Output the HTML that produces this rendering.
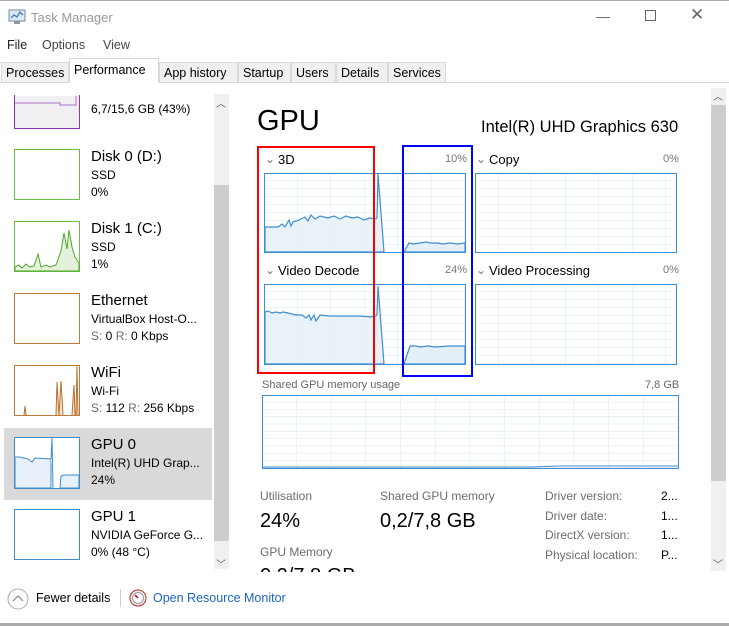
<!DOCTYPE html>
<html><head><meta charset="utf-8"><style>
*{margin:0;padding:0;box-sizing:border-box}
body{width:729px;height:626px;background:#fff;font-family:"Liberation Sans",sans-serif;color:#000;position:relative;overflow:hidden}
.a{position:absolute;white-space:nowrap}
.t{font-size:12.5px}
.g{color:#6d6d6d}
.tab{position:absolute;top:62px;height:20px;border:1px solid #d9d9d9;border-bottom:none;background:#f0f0f0;font-size:12.5px;padding:3px 4px 0}
.thumb{position:absolute;left:14px;width:66px;height:51px;border:1px solid}
.n1{font-size:15px}
.n2{font-size:12px}
</style></head><body>
<div class="a" style="left:0;top:0;width:729px;height:1px;background:#aaa"></div>
<svg class="a" style="left:8px;top:9px" width="18" height="16"><rect x="1" y="1" width="16" height="11" fill="#dfe9f3" stroke="#7a8a99"/><polyline points="3,9 6,6 9,8 12,3 15,6" fill="none" stroke="#3a7bc8" stroke-width="1.3"/><rect x="6" y="12" width="6" height="3" fill="#8a96a3"/></svg>
<div class="a" style="left:31px;top:10px;font-size:13px;color:#999">Task Manager</div>
<div class="a" style="left:596px;top:8px;font-size:14px;color:#666">—</div>
<div class="a" style="left:645px;top:10px;width:11px;height:11px;border:1px solid #666"></div>
<div class="a" style="left:690px;top:5px;font-size:17px;color:#666">✕</div>
<div class="a t" style="left:7px;top:38px;color:#222">File</div>
<div class="a t" style="left:42px;top:38px;color:#444">Options</div>
<div class="a t" style="left:103px;top:38px;color:#444">View</div>
<div class="a" style="left:0;top:82px;width:729px;height:1px;background:#d9d9d9"></div>
<div class="tab" style="left:1px;width:68px">Processes</div>
<div class="tab" style="left:69px;top:58px;height:25px;width:90px;background:#fff;padding-top:4px">Performance</div>
<div class="tab" style="left:159px;width:79px">App history</div>
<div class="tab" style="left:238px;width:53px">Startup</div>
<div class="tab" style="left:291px;width:45px">Users</div>
<div class="tab" style="left:336px;width:52px">Details</div>
<div class="tab" style="left:388px;width:58px">Services</div>
<div class="a" style="left:214px;top:94px;width:15px;height:475px;background:#f0f0f0"></div>
<div class="a" style="left:214px;top:185px;width:15px;height:356px;background:#cdcdcd"></div>
<div class="a" style="left:216px;top:95px;font-size:10px;color:#555">︿</div>
<div class="a" style="left:216px;top:556px;font-size:10px;color:#555">﹀</div>
<div class="a" style="left:4px;top:428px;width:208px;height:72px;background:#d9d9d9"></div>
<svg class="a" style="left:14px;top:95px" width="66" height="34"><rect x="0.5" y="0" width="65" height="33.5" fill="#f0f0f2" stroke="#9b30b8"/><path d="M0.5 8H46V10H62V1" fill="none" stroke="#b06cc8"/><rect x="0" y="0" width="66" height="1" fill="#fff"/><path d="M0.5 0V33.5H65.5V0" fill="none" stroke="#9b30b8"/></svg>
<div class="a n2" style="left:91px;top:102px">6,7/15,6 GB (43%)</div>
<div class="thumb" style="top:149px;border-color:#6cbf45"></div>
<div class="a n1" style="left:91px;top:148px">Disk 0 (D:)</div>
<div class="a n2" style="left:91px;top:168px">SSD</div>
<div class="a n2" style="left:91px;top:185px">0%</div>
<svg class="a" style="left:14px;top:221px" width="66" height="51"><rect x="0.5" y="0.5" width="65" height="50" fill="#fff" stroke="#6cbf45"/><path d="M1 50L1 46 5 44 8 47 12 43 16 46 20 45 24 33 27 46 32 44 36 46 42 44 47 30 50 12 53 28 55 9 58 26 61 36 65 42 65 50Z" fill="#e4f2dc" stroke="#4ea82a"/></svg>
<div class="a n1" style="left:91px;top:220px">Disk 1 (C:)</div>
<div class="a n2" style="left:91px;top:240px">SSD</div>
<div class="a n2" style="left:91px;top:257px">1%</div>
<div class="thumb" style="top:293px;border-color:#c07a38"></div>
<div class="a n1" style="left:91px;top:292px">Ethernet</div>
<div class="a n2" style="left:91px;top:312px">VirtualBox Host-O...</div>
<div class="a n2" style="left:91px;top:329px"><span class="g">S:</span> 0 <span class="g">R:</span> 0 Kbps</div>
<svg class="a" style="left:14px;top:365px" width="66" height="51"><rect x="0.5" y="0.5" width="65" height="50" fill="#fff" stroke="#c07a38"/><path d="M10 50L11 41 12 50M42 50L43 17 45 50M45 50L47 16 49 50M58 50L60 20 61 50M62 50L63 1 64 50" fill="#f5e3d2" stroke="#b8702d"/></svg>
<div class="a n1" style="left:91px;top:364px">WiFi</div>
<div class="a n2" style="left:91px;top:384px">Wi-Fi</div>
<div class="a n2" style="left:91px;top:401px"><span class="g">S:</span> 112 <span class="g">R:</span> 256 Kbps</div>
<svg class="a" style="left:14px;top:437px" width="66" height="53"><rect x="0.5" y="0.5" width="65" height="51" fill="#fff" stroke="#3d8ed0"/><path d="M1 20L5 20 10 21 14 22 18 25 21 21 37 22 37 51 1 51Z" fill="#e8f1f9" stroke="#3d8ed0"/><path d="M37 22L38 1 39 51M46 51L47 39 50 38 65 38 65 51Z" fill="#e8f1f9" stroke="#3d8ed0"/></svg>
<div class="a n1" style="left:91px;top:436px">GPU 0</div>
<div class="a n2" style="left:91px;top:456px">Intel(R) UHD Grap...</div>
<div class="a n2" style="left:91px;top:473px">24%</div>
<div class="thumb" style="top:509px;border-color:#3d8ed0"></div>
<div class="a n1" style="left:91px;top:508px">GPU 1</div>
<div class="a n2" style="left:91px;top:528px">NVIDIA GeForce G...</div>
<div class="a n2" style="left:91px;top:545px">0%  (48 °C)</div>
<div class="a" style="left:711px;top:88px;width:15px;height:483px;background:#f0f0f0"></div>
<div class="a" style="left:711px;top:105px;width:15px;height:376px;background:#cdcdcd"></div>
<div class="a" style="left:713px;top:88px;font-size:10px;color:#555">︿</div>
<div class="a" style="left:713px;top:556px;font-size:10px;color:#555">﹀</div>
<div class="a" style="left:257px;top:105px;font-size:29px">GPU</div>
<div class="a" style="left:481px;top:118px;font-size:16.5px">Intel(R) UHD Graphics 630</div>
<div class="a" style="left:265px;top:152px;font-size:12px;color:#777">⌄</div>
<div class="a" style="left:278px;top:152px;font-size:13px">3D</div>
<div class="a" style="left:445px;top:153px;font-size:11px;color:#777">10%</div>
<div class="a" style="left:476px;top:152px;font-size:12px;color:#777">⌄</div>
<div class="a" style="left:489px;top:152px;font-size:13px">Copy</div>
<div class="a" style="left:663px;top:153px;font-size:11px;color:#777">0%</div>
<div class="a" style="left:265px;top:263px;font-size:12px;color:#777">⌄</div>
<div class="a" style="left:278px;top:263px;font-size:13px">Video Decode</div>
<div class="a" style="left:445px;top:264px;font-size:11px;color:#777">24%</div>
<div class="a" style="left:476px;top:263px;font-size:12px;color:#777">⌄</div>
<div class="a" style="left:489px;top:263px;font-size:13px">Video Processing</div>
<div class="a" style="left:663px;top:264px;font-size:11px;color:#777">0%</div>
<div class="a" style="left:262px;top:379px;font-size:11px;color:#666">Shared GPU memory usage</div>
<div class="a" style="left:645px;top:379px;font-size:11px;color:#666">7,8 GB</div>
<svg class="a" style="left:0;top:0" width="729" height="626">
<defs>
<pattern id="gp" x="264" y="173" width="33.5" height="8" patternUnits="userSpaceOnUse"><path d="M33.5 0V8M0 8H33.5" stroke="#d6e6f4" fill="none"/></pattern>
<pattern id="gq" x="264" y="284" width="33.5" height="8" patternUnits="userSpaceOnUse"><path d="M33.5 0V8M0 8H33.5" stroke="#d6e6f4" fill="none"/></pattern>
<pattern id="gm" x="262" y="395" width="34.7" height="7.3" patternUnits="userSpaceOnUse"><path d="M34.7 0V7.3M0 7.3H34.7" stroke="#d6e6f4" fill="none"/></pattern>
</defs>
<g stroke="#3d8ed0" stroke-width="1">
<rect x="264.5" y="173.5" width="201" height="79" fill="url(#gp)"/>
<rect x="475.5" y="173.5" width="201" height="79" fill="url(#gp)"/>
<rect x="264.5" y="284.5" width="201" height="80" fill="url(#gq)"/>
<rect x="475.5" y="284.5" width="201" height="80" fill="url(#gq)"/>
<rect x="262.5" y="395.5" width="416" height="73" fill="url(#gm)"/>
</g>
<path d="M265 227L278 227 282 224 285 227 289 220 291 226 293 222 299 220 305 217 308 221 311 215 315 219 320 216 328 218 334 216 340 219 346 216 352 218 358 217 364 220 370 218 376 219 377 217 378 174 384 252 265 252Z" fill="#e5eff8" fill-opacity=".8" stroke="#3d8ed0" stroke-width="1.2"/>
<path d="M404 252L409 243 413 244 420 243 426 242 431 243 437 243 443 244 450 243 458 244 465 243 465 252Z" fill="#e5eff8" stroke="#3d8ed0" stroke-width="1.2"/>
<path d="M265 312L268 311 272 313 276 312 280 313 283 312 288 313 292 314 296 315 302 315 306 318 309 315 311 320 314 315 316 321 318 318 320 315 330 316 340 316 350 316 360 316 370 317 376 316 377 314 378 286 384 364 265 364Z" fill="#e5eff8" fill-opacity=".8" stroke="#3d8ed0" stroke-width="1.2"/>
<path d="M404 364L410 346 416 346 420 347 428 346 435 347 450 346 465 346 465 364Z" fill="#e5eff8" stroke="#3d8ed0" stroke-width="1.2"/>
<path d="M263 467L530 467 560 466 600 466 678 466" fill="none" stroke="#3d8ed0"/>
<rect x="258" y="147" width="116" height="226" fill="none" stroke="#f00" stroke-width="2"/>
<rect x="403" y="146" width="69" height="230" fill="none" stroke="#00f" stroke-width="2"/>
</svg>
<div class="a" style="left:260px;top:489px;font-size:12px;color:#6d6d6d">Utilisation</div>
<div class="a" style="left:260px;top:510px;font-size:20px">24%</div>
<div class="a" style="left:380px;top:489px;font-size:12px;color:#6d6d6d">Shared GPU memory</div>
<div class="a" style="left:380px;top:510px;font-size:20px">0,2/7,8 GB</div>
<div class="a" style="left:260px;top:545px;font-size:12px;color:#6d6d6d">GPU Memory</div>
<div class="a" style="left:260px;top:566px;font-size:20px;height:6px;overflow:hidden;line-height:20px">0,2/7,8 GB</div>
<div class="a" style="left:545px;top:487px;font-size:12px;color:#6d6d6d;line-height:19.7px">Driver version:<br>Driver date:<br>DirectX version:<br>Physical location:</div>
<div class="a" style="left:661px;top:487px;font-size:12px;line-height:19.7px">2...<br>1...<br>1...<br>P...</div>
<svg class="a" style="left:7px;top:588px" width="22" height="22"><circle cx="11" cy="11" r="10" fill="#fff" stroke="#aaa"/><path d="M6 13L11 8 16 13" fill="none" stroke="#888" stroke-width="1.2"/></svg>
<div class="a" style="left:36px;top:591px;font-size:12.5px">Fewer details</div>
<div class="a" style="left:120px;top:589px;width:1px;height:18px;background:#ccc"></div>
<svg class="a" style="left:129px;top:589px" width="18" height="18"><circle cx="9" cy="9" r="8" fill="#f4f4f4" stroke="#b22"/><circle cx="9" cy="9" r="5.5" fill="#fff" stroke="#999"/><path d="M6 6L9 9" stroke="#c00" stroke-width="1.5"/></svg>
<div class="a" style="left:153px;top:591px;font-size:12.5px;color:#1a66c2">Open Resource Monitor</div>
<div class="a" style="left:0;top:623px;width:729px;height:3px;background:#aaa"></div>
</body></html>
